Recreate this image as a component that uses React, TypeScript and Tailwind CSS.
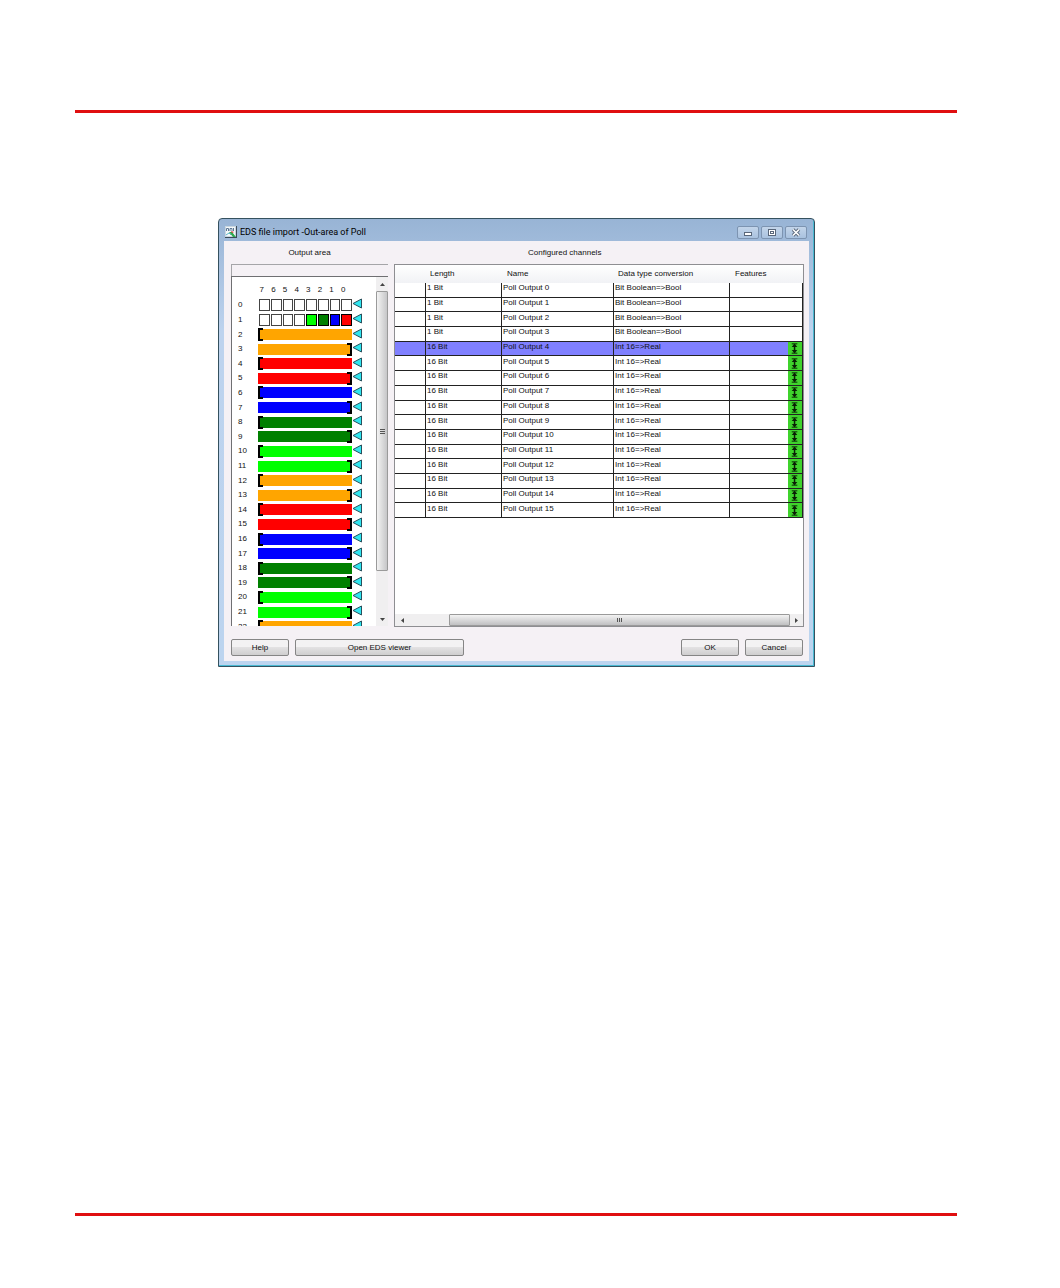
import clsx from 'clsx'

const BITS = [7, 6, 5, 4, 3, 2, 1, 0]

const BIT_COLORS: Record<number, string> = {
  3: 'bg-[#00ff00]',
  2: 'bg-[#008000]',
  1: 'bg-[#0000ff]',
  0: 'bg-[#ff0000]',
}

// one colour per 16 bit word, two bytes each
const WORD_COLORS = ['bg-[#ffa500]', 'bg-[#ff0000]', 'bg-[#0000ff]', 'bg-[#008000]', 'bg-[#00ff00]']

const BYTES = Array.from({ length: 23 }, (_, i) => i)

const CHANNELS = Array.from({ length: 16 }, (_, i) => ({
  name: `Poll Output ${i}`,
  length: i < 4 ? '1 Bit' : '16 Bit',
  conversion: i < 4 ? 'Bit Boolean=>Bool' : 'Int 16=>Real',
  scaled: i >= 4,
}))

const SELECTED = 4

// ── Icons ─────────────────────────────────────────────────────────────────────
function AppIcon() {
  return (
    <svg width="12" height="12" viewBox="0 0 12 12" className="shrink-0">
      <rect x="0.5" y="0.5" width="10" height="10" fill="#f4f8fa" stroke="#c9d6e0" />
      <path d="M1.500 5V2.500h2V5M5 5V2.500h2V5M8.500 5V2" stroke="#5d7896" fill="none" />
      <path d="M1 9l3-2 2 2" stroke="#5fb7c9" fill="none" />
      <path d="M4 6l3 0 4 5H8z" fill="#2fa84f" />
      <path d="M6 5l3 1-2 1z" fill="#d33" />
      <path d="M11.500 0v12M0 11.500h12" stroke="#3b4a58" />
    </svg>
  )
}

function Arrow() {
  return (
    <svg width="11" height="11" viewBox="0 0 11 11" className="mb-[3px] shrink-0">
      <path d="M1 5.500L9.500 1v9z" fill="#2fe6f0" stroke="#27505c" strokeWidth="1" />
    </svg>
  )
}

function ScaleIcon() {
  return (
    <svg viewBox="0 0 15 13" className="block h-[13px] w-full">
      <path d="M4 1.500h6M4 11.500h6" stroke="#0a1f05" strokeWidth="1" />
      <path d="M7 2v9" stroke="#0a1f05" strokeWidth="1.600" />
      <path d="M7 1.500L10 5H4zM7 11.500L10 8H4z" fill="#0a1f05" />
    </svg>
  )
}

function Caret({ d }: { d: string }) {
  return (
    <svg width="5" height="5" viewBox="0 0 5 5">
      <path d={d} fill="#444" />
    </svg>
  )
}

// ── Pieces ────────────────────────────────────────────────────────────────────
function CaptionButton({ label, children }: { label: string; children: React.ReactNode }) {
  return (
    <button
      aria-label={label}
      className="flex h-[13px] w-[22px] items-center justify-center rounded-[2px] border border-[#7d94b1] bg-linear-to-b from-[#c3d5ea] to-[#a9c2df]"
    >
      <svg width="10" height="9" viewBox="0 0 10 9" fill="none">{children}</svg>
    </button>
  )
}

function PushButton({ label, className }: { label: string; className: string }) {
  return (
    <button
      className={clsx(
        'h-[17px] rounded-[2px] border border-[#858585] bg-linear-to-b from-[#f3f2f3] from-45% via-[#e2e1e2] via-50% to-[#cfcecf] leading-none',
        className,
      )}
    >
      {label}
    </button>
  )
}

function ByteRow({ index }: { index: number }) {
  const word = index - 2
  const first = word % 2 === 0
  return (
    <div className="flex min-h-0 flex-1 items-center">
      <span className="w-5 shrink-0 leading-none">{index}</span>
      {index < 2 ? (
        <div className="flex h-3 flex-1 gap-px pl-px">
          {BITS.map(bit => {
            const color = index === 1 ? BIT_COLORS[bit] : undefined
            return <span key={bit} className={clsx('flex-1 border', color ? `border-black ${color}` : 'border-[#444] bg-white')} />
          })}
        </div>
      ) : (
        <div className={clsx('flex h-[11px] flex-1 items-center', WORD_COLORS[Math.floor(word / 2) % 5], !first && 'justify-end')}>
          <span className={clsx('h-[13px] w-[5px] shrink-0 border-y-2 border-black', first ? 'border-l-2' : 'border-r-2')} />
        </div>
      )}
      <Arrow />
    </div>
  )
}

function OutputArea() {
  return (
    <section className="flex w-[157px] shrink-0 flex-col">
      <h2 className="flex h-[23px] items-center justify-center leading-none">Output area</h2>
      <div className="h-3 border-t border-l border-[#a5a5a8]" />
      <div className="flex h-[350px] border-t border-l border-[#6f6f72] bg-white">
        <div className="flex-1 overflow-hidden pl-1.5">
          <div className="flex h-[21px] items-end pr-[27px] pb-1 pl-[18px]">
            {BITS.map(bit => (
              <span key={bit} className="flex-1 text-center leading-none">{bit}</span>
            ))}
          </div>
          <div className="flex h-[336px] flex-col pr-[13px]">
            {BYTES.map(i => <ByteRow key={i} index={i} />)}
          </div>
        </div>
        <div className="flex w-3 shrink-0 flex-col bg-[#f0eff0]">
          <button aria-label="Scroll up" className="flex h-[14px] items-center justify-center">
            <Caret d="M0 4l2.500-3L5 4z" />
          </button>
          <div className="flex h-[280px] items-center justify-center rounded-[1px] border border-[#9a9a9a] bg-linear-to-r from-[#f3f3f3] to-[#c6c6c8]">
            <span className="flex h-[5px] w-[5px] flex-col justify-between">
              <i className="h-px bg-[#555]" />
              <i className="h-px bg-[#555]" />
              <i className="h-px bg-[#555]" />
            </span>
          </div>
          <button aria-label="Scroll down" className="mt-auto flex h-[14px] items-center justify-center">
            <Caret d="M0 1h5L2.500 4z" />
          </button>
        </div>
      </div>
    </section>
  )
}

function ConfiguredChannels() {
  const cell = 'border-b border-l border-[#222] p-0 pb-[3px] pl-px leading-none whitespace-nowrap'
  return (
    <section className="flex min-w-0 flex-1 flex-col">
      <h2 className="flex h-[23px] items-center pl-[134px] leading-none">Configured channels</h2>
      <div className="flex h-[363px] flex-col border border-[#8e8e92] bg-white">
        <table className="h-[253px] w-full table-fixed border-separate border-spacing-0 text-left">
          <colgroup>
            <col className="w-[30px]" />
            <col className="w-[76px]" />
            <col className="w-[112px]" />
            <col className="w-[116px]" />
            <col />
            <col className="w-[15px]" />
          </colgroup>
          <thead>
            <tr className="h-[18px] bg-linear-to-b from-white to-[#f1f2f5]">
              <td className="p-0" />
              <th className="p-0 pl-[5px] leading-none font-normal">Length</th>
              <th className="p-0 pl-1.5 leading-none font-normal">Name</th>
              <th className="p-0 pl-[5px] leading-none font-normal">Data type conversion</th>
              <th className="p-0 pl-1.5 leading-none font-normal" colSpan={2}>Features</th>
            </tr>
          </thead>
          <tbody>
            {CHANNELS.map((c, i) => (
              <tr key={c.name} className={clsx('h-[14px]', i === SELECTED ? 'bg-[#8080ff]' : 'bg-white')}>
                <td className="border-b border-[#222] p-0" />
                <td className={cell}>{c.length}</td>
                <td className={cell}>{c.name}</td>
                <td className={cell}>{c.conversion}</td>
                <td className={cell} />
                <td className={clsx('border-r border-b border-[#222] p-0', c.scaled && 'bg-[#3fd32c]')}>
                  {c.scaled && <ScaleIcon />}
                </td>
              </tr>
            ))}
          </tbody>
        </table>
        <div className="mt-auto flex h-3 bg-[#f0eff0]">
          <button aria-label="Scroll left" className="flex w-[14px] items-center justify-center">
            <Caret d="M4 0v5L1 2.500z" />
          </button>
          <div className="ml-10 flex flex-1 items-center justify-center rounded-[1px] border border-[#9a9a9a] bg-linear-to-b from-[#f3f3f3] to-[#c0c0c2]">
            <span className="flex h-1 w-[5px] justify-between">
              <i className="w-px bg-[#555]" />
              <i className="w-px bg-[#555]" />
              <i className="w-px bg-[#555]" />
            </span>
          </div>
          <button aria-label="Scroll right" className="flex w-[13px] items-center justify-center">
            <Caret d="M1 0l3 2.500L1 5z" />
          </button>
        </div>
      </div>
    </section>
  )
}

function ImportDialog() {
  return (
    <div
      role="dialog"
      aria-label="EDS file import -Out-area of Poll"
      className="w-full max-w-[597px] rounded-t-[4px] border border-[#35515f] bg-linear-to-b from-[#98b4d5] via-[#bdd3ee] via-25% to-[#bcd4ef] px-[5px] pb-[5px] text-[#111] shadow-[inset_-1px_-1px_0_#49b9d2]"
    >
      <header className="flex h-[22px] items-center gap-0.5 pt-1 pr-0.5 pl-px">
        <AppIcon />
        <h1 className="flex-1 pl-px font-['Roboto','Noto_Sans',sans-serif] text-[9px] leading-none text-black">
          EDS file import -Out-area of Poll
        </h1>
        <CaptionButton label="Minimize">
          <rect x="1.500" y="4.500" width="7" height="3" fill="#fff" stroke="#59677a" />
        </CaptionButton>
        <CaptionButton label="Maximize">
          <rect x="1.500" y="1.500" width="7" height="6" fill="#fff" stroke="#59677a" />
          <rect x="3.500" y="3.500" width="3" height="2" stroke="#59677a" />
        </CaptionButton>
        <CaptionButton label="Close">
          <path d="M2 1.500l6 6M8 1.500l-6 6" stroke="#59677a" strokeWidth="3.400" />
          <path d="M2 1.500l6 6M8 1.500l-6 6" stroke="#fff" strokeWidth="1.600" />
        </CaptionButton>
      </header>

      <div className="bg-[#f5f1f5] pr-[5px] pl-[7px]">
        <div className="flex gap-1.5">
          <OutputArea />
          <ConfiguredChannels />
        </div>
        <footer className="flex gap-1.5 pt-3 pr-px pb-[5px]">
          <PushButton label="Help" className="w-[58px]" />
          <PushButton label="Open EDS viewer" className="w-[169px]" />
          <PushButton label="OK" className="ml-auto w-[58px]" />
          <PushButton label="Cancel" className="w-[58px]" />
        </footer>
      </div>
    </div>
  )
}

export default function App() {
  return (
    <div className="flex min-h-screen flex-col bg-white pt-[110px] pr-[103px] pb-[72px] pl-[75px] font-['Liberation_Sans',Arial,sans-serif] text-[8px]">
      <hr className="border-t-3 border-[#e00f10]" />
      <main className="flex-1 pt-[105px] pl-[143px]">
        <ImportDialog />
      </main>
      <hr className="border-t-3 border-[#e00f10]" />
    </div>
  )
}
